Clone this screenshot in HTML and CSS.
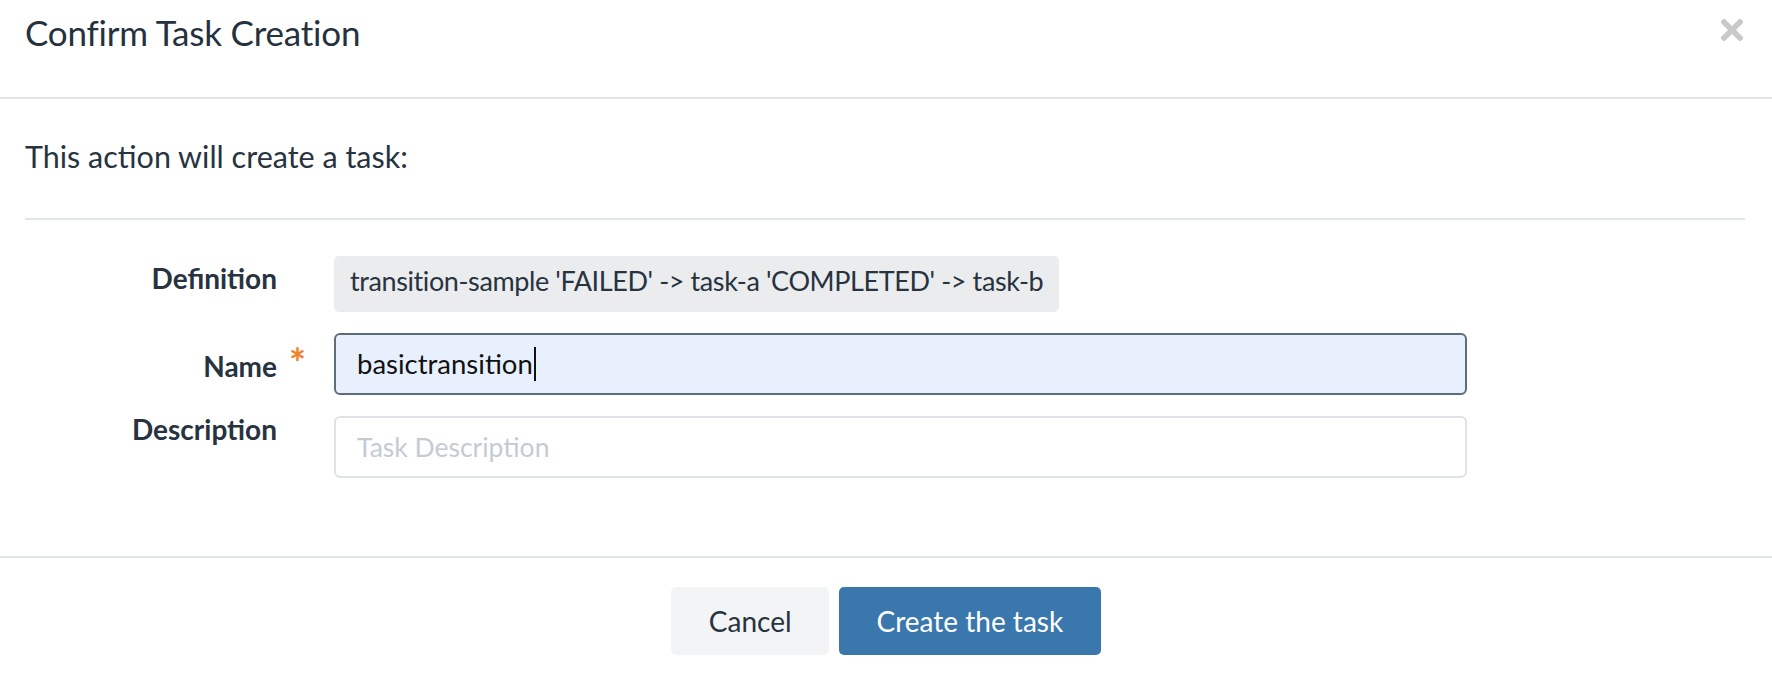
FILE: index.html
```html
<!DOCTYPE html>
<html lang="en">
<head>
<meta charset="utf-8">
<title>Confirm Task Creation</title>
<link rel="stylesheet" href="styles.css">
</head>
<body>
<div class="modal">
  <header class="modal-header">
    <h1 class="modal-title">Confirm Task Creation</h1>
    <button class="close" aria-label="Close">
      <svg width="22" height="22" viewBox="0 0 22 22"><path d="M3 3 L19 19 M19 3 L3 19" stroke="#c9c9c9" stroke-width="5.5" stroke-linecap="square" fill="none"/></svg>
    </button>
  </header>
  <section class="modal-body">
    <p class="intro">This action will create a task:</p>
    <hr class="divider">
    <div class="form">
      <div class="label label-def">Definition</div>
      <div class="control">
        <span class="definition">transition-sample 'FAILED' -&gt; task-a 'COMPLETED' -&gt; task-b</span>
      </div>
      <div class="label label-name required">Name</div>
      <div class="control">
        <div class="input input-focus"><span class="value">basictransition</span><span class="caret"></span></div>
      </div>
      <div class="label label-desc">Description</div>
      <div class="control">
        <div class="input"><span class="placeholder">Task Description</span></div>
      </div>
    </div>
  </section>
  <footer class="modal-footer">
    <button class="btn btn-cancel">Cancel</button>
    <button class="btn btn-primary">Create the task</button>
  </footer>
</div>
</body>
</html>
```
FILE: styles.css
```css
* { box-sizing: border-box; }
html, body { margin: 0; padding: 0; background: #fff; }
body {
  font-family: "Lato", "Liberation Sans", sans-serif;
  color: #27333f;
  width: 1772px;
  height: 674px;
  overflow: hidden;
}
.modal { width: 100%; }
.modal-header {
  display: flex;
  justify-content: space-between;
  align-items: flex-start;
  height: 99px;
  padding: 8px 29px 0 25px;
  border-bottom: 2px solid #e1e5e5;
}
.modal-title {
  margin: 0;
  font-size: 35px;
  letter-spacing: -0.2px;
  font-weight: 400;
  line-height: 48px;
  color: #25313d;
}
.close {
  margin-top: 11px;
  padding: 0;
  border: 0;
  background: none;
  width: 22px;
  height: 22px;
  display: block;
}
.close svg { display: block; }
.modal-body {
  padding: 37px 27px 78px 25px;
}
.intro {
  margin: 0;
  font-size: 30.5px;
  line-height: 40px;
}
.divider {
  margin: 42px 0 36px 0;
  border: 0;
  border-top: 2px solid #e3e6e9;
  height: 0;
}
.form {
  display: grid;
  grid-template-columns: 252px 1133px;
  column-gap: 57px;
  row-gap: 21px;
}
.label {
  text-align: right;
  font-weight: 700;
  font-size: 28px;
  line-height: 24px;
  color: #27333f;
  position: relative;
}
.label-def { padding-top: 10px; }
.label-name { padding-top: 21px; }
.label-desc { padding-top: 1px; }
.required::after {
  content: "*";
  position: absolute;
  right: -29px;
  top: 10px;
  color: #f0822f;
  font-size: 40px;
  line-height: 40px;
  font-weight: 700;
}
.control { display: flex; }
.definition {
  display: inline-block;
  background: #ebecee;
  border-radius: 5px;
  padding: 7px 16px 13px 16px;
  font-size: 27px;
  letter-spacing: -0.4px;
  line-height: 36px;
  color: #27333f;
}
.input {
  width: 100%;
  height: 62px;
  border: 2px solid #dfe3e7;
  border-radius: 6px;
  padding: 9px 18px 9px 21px;
  font-size: 27.5px;
  line-height: 40px;
  display: flex;
  align-items: center;
}
.input-focus {
  border-color: #5e6d78;
  background: #e8f0fe;
}
.value { color: #111; }
.caret {
  display: inline-block;
  width: 2px;
  height: 34px;
  background: #111;
  margin-left: 1px;
}
.placeholder { color: #c4cbd2; font-size: 26.5px; }
.modal-footer {
  border-top: 2px solid #e1e5e5;
  display: flex;
  justify-content: center;
  gap: 10px;
  padding-top: 29px;
}
.btn {
  height: 68px;
  border: 0;
  border-radius: 5px;
  font-family: "Lato", "Liberation Sans", sans-serif;
  font-size: 28px;
  padding: 0 37.5px;
}
.btn-cancel {
  background: #f3f4f6;
  color: #27333f;
}
.btn-primary {
  background: #3a77ad;
  color: #fff;
}
```
